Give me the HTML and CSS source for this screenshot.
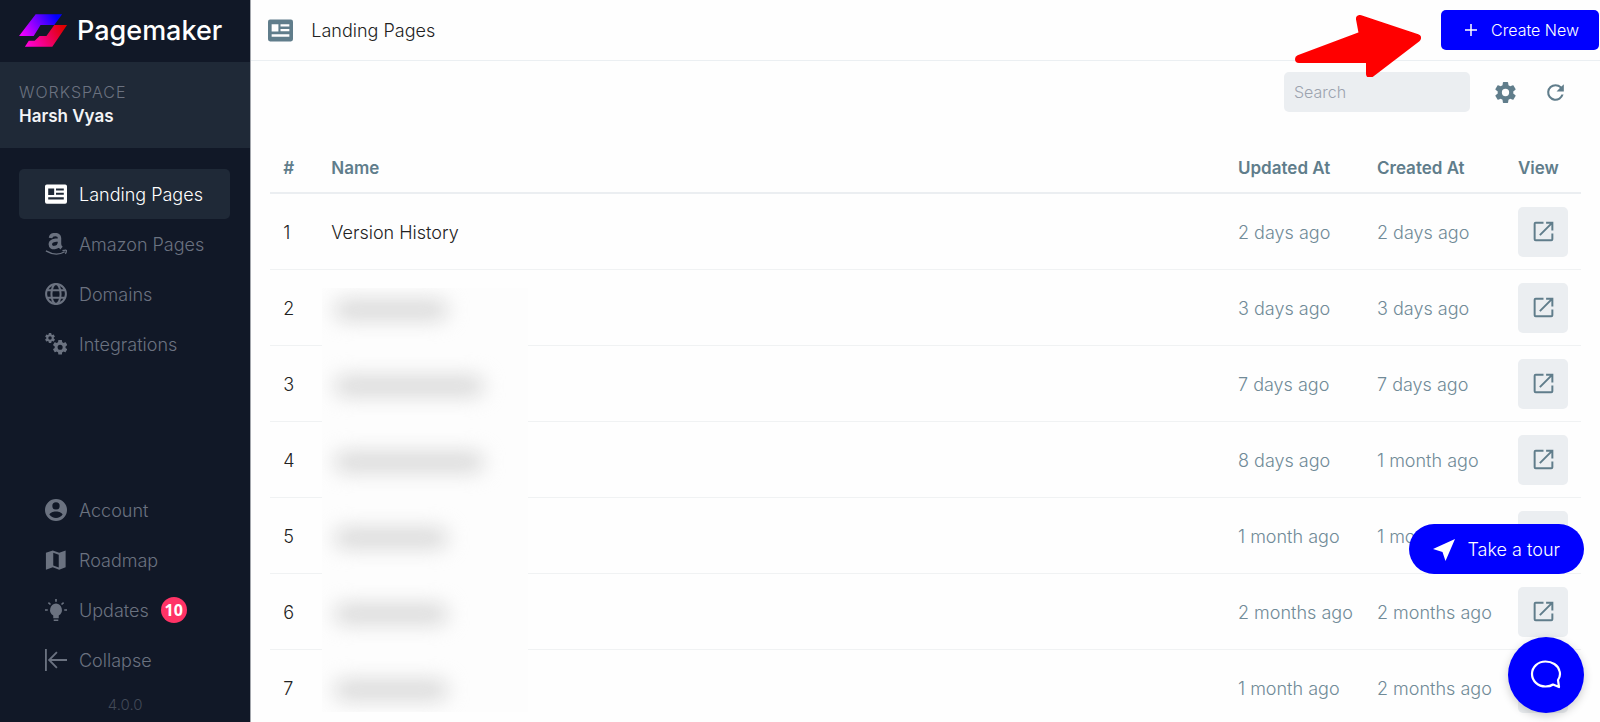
FILE: index.html
```html
<!DOCTYPE html>
<html lang="en">
<head>
<meta charset="utf-8">
<meta name="viewport" content="width=device-width, initial-scale=1">
<title>Landing Pages - Pagemaker</title>
<link rel="stylesheet" href="styles.css">
</head>
<body>
<svg class="sprite" aria-hidden="true">
  <symbol id="open" viewBox="0 0 24 24"><path d="M12 3.500H4.500Q3.500 3.500 3.500 4.500V19.500Q3.500 20.500 4.500 20.500H19.500Q20.500 20.500 20.500 19.500V14M8.500 15.500L20 4M14.500 3.500H20.500V11" fill="none" stroke="currentColor" stroke-width="1.900"/></symbol>
  <symbol id="news" viewBox="0 0 24 24"><path fill="currentColor" fill-rule="evenodd" d="M2 1.500H22A2 2 0 0 1 24 3.500V20.500A2 2 0 0 1 22 22.500H2A2 2 0 0 1 0 20.500V3.500A2 2 0 0 1 2 1.500ZM3.500 6V13H10V6ZM12 6V8.200H20.500V6ZM12 10.500V12.800H20.500V10.500ZM3.500 15.500V18H20.500V15.500Z"/></symbol>
  <symbol id="gear" viewBox="0 0 24 24"><path fill="currentColor" d="M19.430 12.980c.04-.32.07-.64.07-.98s-.03-.66-.07-.98l2.110-1.650c.19-.15.24-.42.12-.64l-2-3.460c-.12-.22-.39-.3-.61-.22l-2.490 1c-.52-.4-1.080-.73-1.690-.98l-.38-2.650A.49.49 0 0 0 14 2h-4c-.25 0-.46.18-.49.42l-.38 2.650c-.61.25-1.170.59-1.690.98l-2.490-1c-.23-.09-.49 0-.61.22l-2 3.460c-.13.22-.07.49.12.64l2.110 1.650c-.04.32-.07.65-.07.98s.03.66.07.98l-2.110 1.650c-.19.15-.24.42-.12.64l2 3.460c.12.22.39.3.61.22l2.490-1c.52.4 1.080.73 1.690.98l.38 2.650c.03.24.24.42.49.42h4c.25 0 .46-.18.49-.42l.38-2.650c.61-.25 1.170-.59 1.690-.98l2.490 1c.23.09.49 0 .61-.22l2-3.460c.12-.22.07-.49-.12-.64l-2.110-1.650zM12 15.500a3.500 3.500 0 1 1 0-7 3.500 3.500 0 0 1 0 7z"/></symbol>
</svg>
<div class="app">
  <aside class="sidebar">
    <a class="brand" href="#">
      <svg class="brand-mark" viewBox="0 0 50 34" aria-hidden="true">
        <defs>
          <linearGradient id="g1" gradientUnits="userSpaceOnUse" x1="4" y1="22" x2="38" y2="2"><stop offset="0" stop-color="#e0f"/><stop offset="1" stop-color="#00f"/></linearGradient>
          <linearGradient id="g2" gradientUnits="userSpaceOnUse" x1="8" y1="33" x2="45" y2="13"><stop offset="0" stop-color="#f0d"/><stop offset="1" stop-color="#e00000"/></linearGradient>
        </defs>
        <path fill="url(#g1)" d="M17 0H44L36 11H22L15 22H0Z"/>
        <path fill="url(#g2)" d="M36 11H49L34 33H6L10 27H16L21 22H28Z"/>
      </svg>
      <span>Pagemaker</span>
    </a>
    <div class="workspace">
      <span class="workspace-label">WORKSPACE</span>
      <strong>Harsh Vyas</strong>
    </div>
    <nav class="nav">
      <a class="item active" href="#"><svg class="icon"><use href="#news"/></svg>Landing Pages</a>
      <a class="item" href="#"><svg class="icon" viewBox="0 0 24 24"><path d="M6 5.500C6.500 .6 15.800 .3 15.800 5.500V12Q15.800 14.500 18 16.500M15.800 7.500C10 7.500 5.800 8.500 5.800 12.300C5.800 17.800 15 17 15.800 10.500" fill="none" stroke="currentColor" stroke-width="3.800"/><path d="M1 19.500Q12 26 21.500 20.500M19 19.300Q24 18 23.300 19.500Q23.300 21.500 22 22.500" fill="none" stroke="currentColor" stroke-width="1.400"/></svg>Amazon Pages</a>
      <a class="item" href="#"><svg class="icon" viewBox="0 0 24 24" fill="none" stroke="currentColor" stroke-width="2.200"><circle cx="12" cy="12" r="10.800"/><ellipse cx="12" cy="12" rx="5" ry="10.800"/><path d="M2 8H22M2 16H22"/></svg>Domains</a>
      <a class="item" href="#"><svg class="icon" viewBox="0 0 24 24"><use href="#gear" x="-1" y="-1" width="13" height="13"/><use href="#gear" x="7" y="6" width="19" height="19"/></svg>Integrations</a>
    </nav>
    <nav class="nav nav-bottom">
      <a class="item" href="#"><svg class="icon" viewBox="0 0 24 24"><path fill="currentColor" fill-rule="evenodd" d="M12 0A12 12 0 1 1 12 24A12 12 0 0 1 12 0ZM12 3.500A4 4 0 1 0 12 11.500A4 4 0 0 0 12 3.500ZM12 13.500C8.500 13.500 5 15 4.800 17C6.500 19.500 9 20.800 12 20.800S17.500 19.500 19.200 17C19 15 15.500 13.500 12 13.500Z"/></svg>Account</a>
      <a class="item" href="#"><svg class="icon" viewBox="0 0 24 24"><path fill="currentColor" fill-rule="evenodd" d="M1 4L8.500 1.500L15.500 4L22.500 1.500V20L15.500 22.500L8.500 20L1 22.500ZM9 4.200V18L15 20.200V6.300Z"/></svg>Roadmap</a>
      <a class="item" href="#"><svg class="icon" viewBox="0 0 24 24"><path fill="currentColor" d="M12 5A7 7 0 0 1 15 18V21H9V18A7 7 0 0 1 12 5ZM9.500 22.300H14.500V24H9.500Z"/><path d="M12 0V3M0 12H3M21 12H24M3.700 4L6 6M20.300 4L18 6" stroke="currentColor" stroke-width="1.800"/></svg>Updates<span class="count">10</span></a>
      <button class="item" type="button"><svg class="icon" viewBox="0 0 24 24"><path d="M1 0V24M24 12H4M13 3.500L4.500 12L13 20.500" fill="none" stroke="currentColor" stroke-width="2"/></svg>Collapse</button>
    </nav>
    <div class="version">4.0.0</div>
  </aside>
  <main class="main">
    <header class="topbar">
      <svg class="title-icon" aria-hidden="true"><use href="#news"/></svg>
      <h1>Landing Pages</h1>
      <button class="create" type="button"><svg viewBox="0 0 12 12" aria-hidden="true"><path d="M6 0V12M0 6H12" stroke="currentColor" stroke-width="1.500"/></svg>Create New</button>
    </header>
    <div class="toolbar">
      <input class="search" type="search" placeholder="Search" aria-label="Search">
      <button class="tool" type="button" aria-label="Settings"><svg><use href="#gear"/></svg></button>
      <button class="tool" type="button" aria-label="Refresh"><svg viewBox="0 0 24 24"><path fill="currentColor" d="M17.650 6.350A7.960 7.960 0 0 0 12 4a8 8 0 1 0 7.730 10h-2.080A6 6 0 1 1 12 6c1.660 0 3.140.69 4.220 1.780L13 11h7V4z"/></svg></button>
    </div>
    <div class="table-wrap">
      <table class="pages">
        <thead><tr><th class="col-num">#</th><th>Name</th><th class="col-updated">Updated At</th><th class="col-created">Created At</th><th class="col-view">View</th></tr></thead>
        <tbody>
          <tr><td>1</td><td>Version History</td><td class="date">2 days ago</td><td class="date">2 days ago</td><td class="action"><button class="view" type="button" aria-label="View page 1"><svg><use href="#open"/></svg></button></td></tr>
          <tr><td>2</td><td></td><td class="date">3 days ago</td><td class="date">3 days ago</td><td class="action"><button class="view" type="button" aria-label="View page 2"><svg><use href="#open"/></svg></button></td></tr>
          <tr><td>3</td><td></td><td class="date">7 days ago</td><td class="date">7 days ago</td><td class="action"><button class="view" type="button" aria-label="View page 3"><svg><use href="#open"/></svg></button></td></tr>
          <tr><td>4</td><td></td><td class="date">8 days ago</td><td class="date">1 month ago</td><td class="action"><button class="view" type="button" aria-label="View page 4"><svg><use href="#open"/></svg></button></td></tr>
          <tr><td>5</td><td></td><td class="date">1 month ago</td><td class="date">1 month ago</td><td class="action"><button class="view" type="button" aria-label="View page 5"><svg><use href="#open"/></svg></button></td></tr>
          <tr><td>6</td><td></td><td class="date">2 months ago</td><td class="date">2 months ago</td><td class="action"><button class="view" type="button" aria-label="View page 6"><svg><use href="#open"/></svg></button></td></tr>
          <tr><td>7</td><td></td><td class="date">1 month ago</td><td class="date">2 months ago</td><td class="action"><button class="view" type="button" aria-label="View page 7"><svg><use href="#open"/></svg></button></td></tr>
        </tbody>
      </table>
      <div class="redacted" aria-hidden="true"><i class="short"></i><i class="long"></i><i class="long"></i><i class="short"></i><i class="short"></i><i class="short"></i></div>
    </div>
  </main>
</div>
<svg class="pointer" viewBox="0 0 130 66" aria-hidden="true"><path d="M8 48L72 24L69 8L126 27L79 63V52L78 48Z" fill="#f00" stroke="#f00" stroke-width="8" stroke-linejoin="round"/></svg>
<button class="tour" type="button"><svg viewBox="0 0 22 22" aria-hidden="true"><path fill="currentColor" d="M22 0L12.500 22L9.500 13L0 10Z"/></svg>Take a tour</button>
<button class="chat" type="button" aria-label="Open chat"><svg viewBox="0 0 32 30"><path d="M29 27L28 20C30 17 30.500 14 29.500 11C28 5 22 1.500 15.500 1.500C8 1.500 2 7 2 14S8 26.500 15.500 26.500C18.500 26.500 21 26 23 24.500Z" fill="none" stroke="currentColor" stroke-width="2.200" stroke-linejoin="round"/></svg></button>
</body>
</html>
```
FILE: styles.css
```css
* { box-sizing: border-box; }
body {
  margin: 0;
  height: 100vh;
  overflow: hidden;
  background: #fefefe;
  color: #222;
  font: 300 18px/24px Inter, "Open Sans", sans-serif;
}
button, input { font: inherit; border: 0; margin: 0; }
button { cursor: pointer; }
a { color: inherit; text-decoration: none; }
.sprite { display: none; }
.app { display: flex; min-height: 100vh; }

.sidebar {
  display: flex;
  flex-direction: column;
  flex: 0 0 251px;
  height: 100vh;
  background: #111827;
  border-right: 1px solid #a4a7ad;
  color: #6b7280;
}
.brand {
  display: flex;
  align-items: center;
  gap: 9px;
  height: 62px;
  padding: 0 19px;
  color: #fff;
  font-size: 27px;
  font-weight: 500;
}
.brand-mark { width: 49px; height: 34px; }
.workspace {
  display: flex;
  flex-direction: column;
  height: 86px;
  padding: 18px 19px;
  background: #1f2937;
}
.workspace-label { font-size: 16px; letter-spacing: 1px; }
.workspace strong { color: #f3f4f6; font-size: 17px; font-weight: 600; }
.nav { padding: 21px 20px 0 19px; }
.nav-bottom { margin-top: auto; }
.item {
  display: flex;
  align-items: center;
  width: 100%;
  height: 50px;
  gap: 12px;
  padding: 2px 26px 0;
  border-radius: 5px;
  background: none;
  color: inherit;
  white-space: nowrap;
}
.item.active { background: #1f2937; color: #fff; }
.icon { flex: none; width: 22px; height: 22px; margin-bottom: 2px; }
.count {
  width: 26px;
  height: 26px;
  margin-bottom: 2px;
  border-radius: 50%;
  background: #ff3366;
  color: #fff;
  font: 700 16px/26px "Open Sans", sans-serif;
  text-align: center;
}
.version {
  padding: 8px 0 5px;
  color: #414957;
  font-size: 15px;
  text-align: center;
}

.main { flex: 1; min-width: 0; }
.topbar {
  display: flex;
  align-items: center;
  height: 61px;
  padding: 0 1px 0 17px;
  border-bottom: 1px solid #ebeff2;
}
.title-icon { width: 25px; height: 25px; color: #607d8b; }
.topbar h1 { flex: 1; margin: 0 0 0 18px; padding-top: 2px; font-size: 18px; font-weight: 300; }
.create {
  display: flex;
  align-items: center;
  gap: 14px;
  height: 40px;
  padding: 0 20px 0 24px;
  border-radius: 5px;
  background: #00f;
  color: #fff;
  font-size: 16px;
}
.create svg { width: 12px; height: 12px; }
.toolbar {
  display: flex;
  align-items: center;
  justify-content: flex-end;
  gap: 10px;
  padding: 11px 25px 0 19px;
}
.search {
  width: 186px;
  height: 40px;
  margin-right: 5px;
  padding: 0 10px;
  border-radius: 5px;
  background: #ebeef1;
  font-size: 16px;
}
.search::placeholder { color: #9ca3af; }
.tool {
  display: grid;
  place-items: center;
  width: 40px;
  height: 40px;
  padding: 0;
  background: none;
  color: #607d8b;
}
.tool svg { width: 25px; height: 25px; }

.table-wrap { position: relative; margin: 28px 19px 0; }
.pages { width: 100%; border-collapse: separate; border-spacing: 0; table-layout: fixed; }
th, td { padding: 3px 13px 0; text-align: left; white-space: nowrap; }
th {
  height: 54px;
  border-bottom: 2px solid #ebeef1;
  color: #607d8b;
  font-size: 17px;
  font-weight: 600;
}
td { height: 76px; border-bottom: 1px solid #f0f2f3; }
.action { padding-top: 0; }
.date { color: #708a97; }
.col-num { width: 48px; }
.col-updated { width: 139px; }
.col-created { width: 141px; }
.col-view { width: 76px; }
.view {
  display: grid;
  place-items: center;
  width: 50px;
  height: 50px;
  padding: 0;
  border-radius: 5px;
  background: #ebeef1;
  color: #607d8b;
}
.view svg { width: 25px; height: 25px; }
.redacted {
  position: absolute;
  top: 148px;
  left: 52px;
  display: grid;
  gap: 56px;
  width: 206px;
  height: 424px;
  padding: 12px 12px;
  overflow: hidden;
  background: #fdfdfd;
}
.redacted i { height: 20px; border-radius: 10px; background: #d8d8d8; filter: blur(10px); }
.short { width: 114px; }
.long { width: 150px; }

.pointer { position: fixed; top: 11px; right: 179px; width: 130px; height: 66px; pointer-events: none; }
.tour {
  position: fixed;
  right: 16px;
  bottom: 148px;
  display: flex;
  align-items: center;
  gap: 12px;
  height: 50px;
  padding: 2px 24px 0;
  border-radius: 25px;
  background: #00f;
  color: #fff;
}
.tour svg { width: 22px; height: 22px; }
.chat {
  position: fixed;
  right: 16px;
  bottom: 9px;
  display: grid;
  place-items: center;
  width: 76px;
  height: 76px;
  padding: 0;
  border-radius: 50%;
  background: #00f;
  box-shadow: 0 3px 10px rgba(0, 0, 0, 0.2);
  color: #fff;
}
.chat svg { width: 32px; height: 30px; }
```
